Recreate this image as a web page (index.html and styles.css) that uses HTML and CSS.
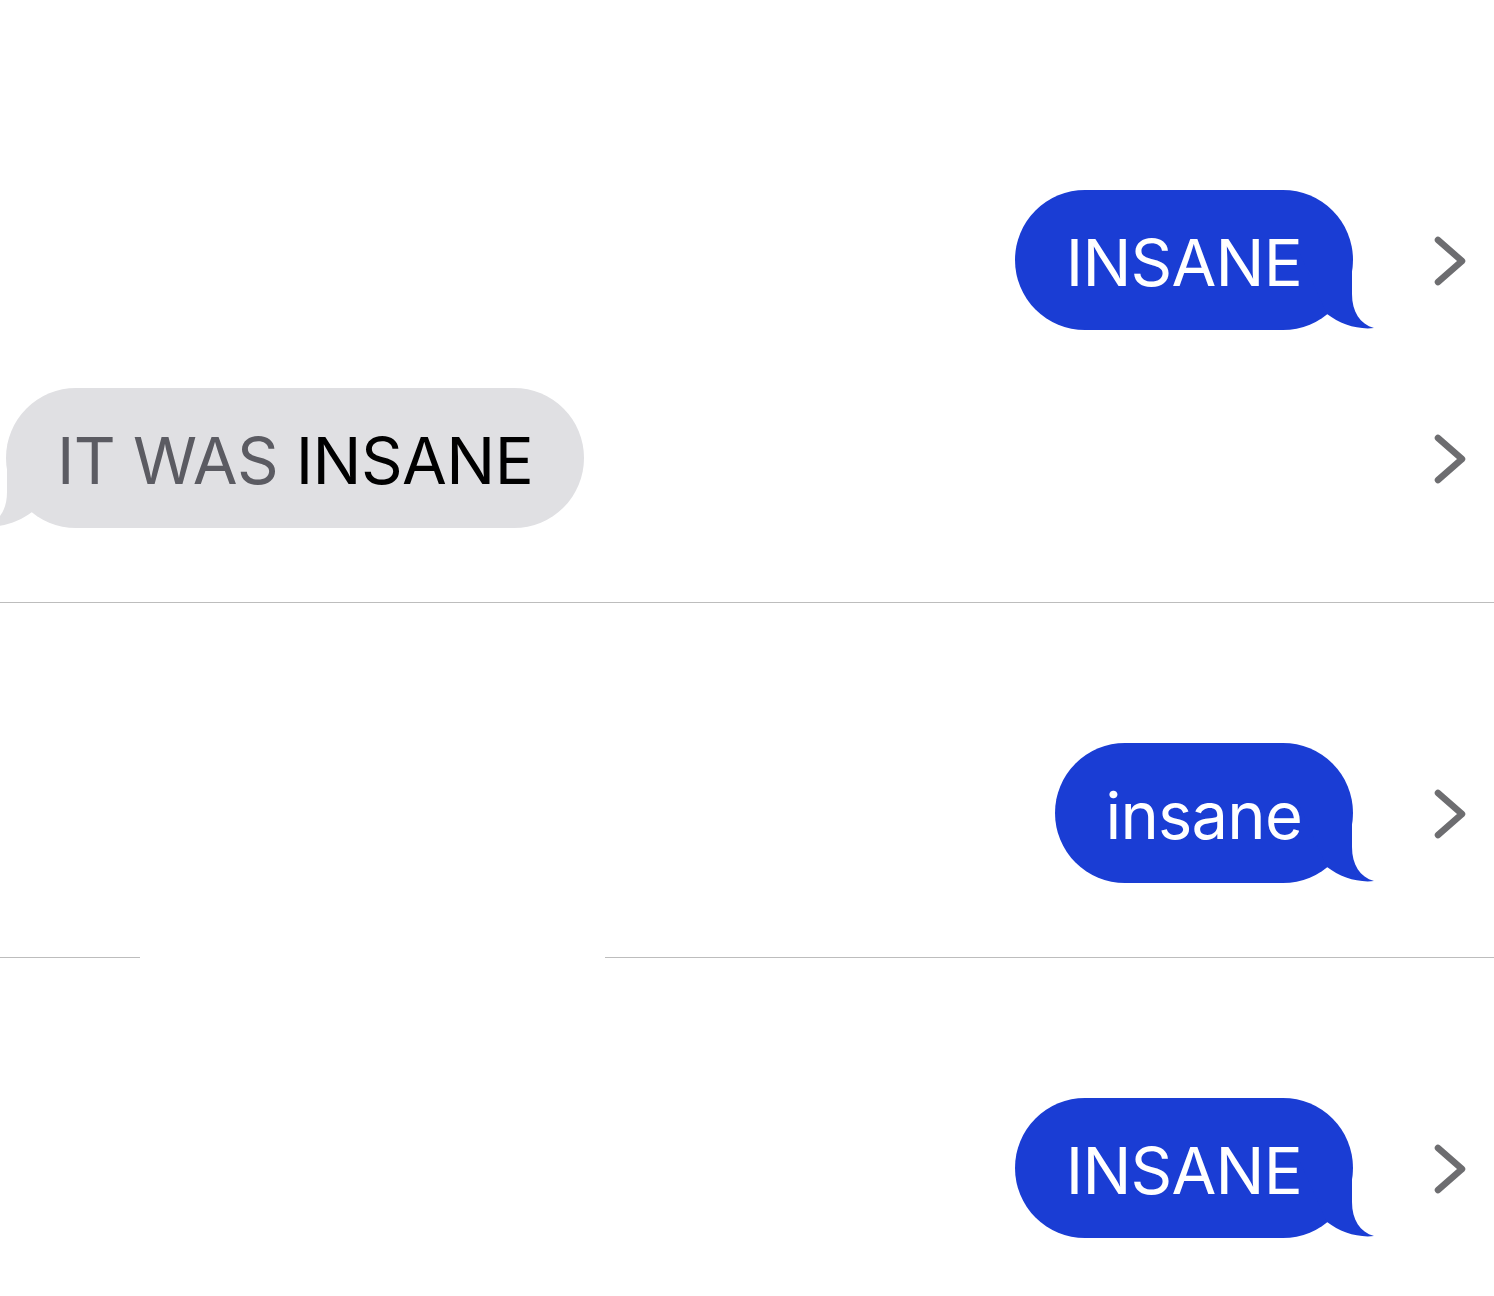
FILE: index.html
```html
<!DOCTYPE html>
<html>
<head>
<meta charset="utf-8">
<link rel="stylesheet" href="styles.css">
</head>
<body>
<div class="page">
  <section class="section first">
    <div class="row">
      <div class="lane lane-right">
        <div class="bubble sent">
          <span class="txt">INSANE</span>
          <svg class="tail tail-right" viewBox="0 0 76 76" width="76" height="76"><path d="M52 0 L52 40 C52 58 60 70 74 74 C58 76 40 70 27 60 L0 0 Z" fill="#1a3dd4"/></svg>
        </div>
      </div>
      <div class="chev-col"><svg class="chev" viewBox="0 0 32 52" width="32" height="52"><polyline points="4,6 28,27 4,48" fill="none" stroke="#6d6d70" stroke-width="6.5" stroke-linecap="round" stroke-linejoin="round"/></svg></div>
    </div>
    <div class="row">
      <div class="lane lane-left">
        <div class="bubble received">
          <span class="txt"><span class="dim">IT WAS</span> INSANE</span>
          <svg class="tail tail-left" viewBox="0 0 76 76" width="76" height="76"><path d="M52 0 L52 40 C52 58 60 70 74 74 C58 76 40 70 27 60 L0 0 Z" fill="#e0e0e3"/></svg>
        </div>
      </div>
      <div class="chev-col"><svg class="chev" viewBox="0 0 32 52" width="32" height="52"><polyline points="4,6 28,27 4,48" fill="none" stroke="#6d6d70" stroke-width="6.5" stroke-linecap="round" stroke-linejoin="round"/></svg></div>
    </div>
  </section>
  <div class="divider"></div>
  <section class="section">
    <div class="row">
      <div class="lane lane-right">
        <div class="bubble sent">
          <span class="txt">insane</span>
          <svg class="tail tail-right" viewBox="0 0 76 76" width="76" height="76"><path d="M52 0 L52 40 C52 58 60 70 74 74 C58 76 40 70 27 60 L0 0 Z" fill="#1a3dd4"/></svg>
        </div>
      </div>
      <div class="chev-col"><svg class="chev" viewBox="0 0 32 52" width="32" height="52"><polyline points="4,6 28,27 4,48" fill="none" stroke="#6d6d70" stroke-width="6.5" stroke-linecap="round" stroke-linejoin="round"/></svg></div>
    </div>
  </section>
  <div class="divider split"><span class="seg seg-a"></span><span class="gap"></span><span class="seg seg-b"></span></div>
  <section class="section">
    <div class="row">
      <div class="lane lane-right">
        <div class="bubble sent">
          <span class="txt">INSANE</span>
          <svg class="tail tail-right" viewBox="0 0 76 76" width="76" height="76"><path d="M52 0 L52 40 C52 58 60 70 74 74 C58 76 40 70 27 60 L0 0 Z" fill="#1a3dd4"/></svg>
        </div>
      </div>
      <div class="chev-col"><svg class="chev" viewBox="0 0 32 52" width="32" height="52"><polyline points="4,6 28,27 4,48" fill="none" stroke="#6d6d70" stroke-width="6.5" stroke-linecap="round" stroke-linejoin="round"/></svg></div>
    </div>
  </section>
</div>
</body>
</html>
```
FILE: styles.css
```css
html, body {
  margin: 0;
  padding: 0;
  background: #ffffff;
}
.page {
  width: 1494px;
  height: 1296px;
  overflow: hidden;
  font-family: Inter, "Liberation Sans", sans-serif;
}
.section {
  display: flex;
  flex-direction: column;
  gap: 58px;
  padding: 140px 0 74px;
}
.section.first {
  padding-top: 190px;
}
.row {
  display: flex;
  align-items: center;
  height: 140px;
}
.lane {
  flex: 1;
  display: flex;
}
.lane-right {
  justify-content: flex-end;
}
.lane-left {
  justify-content: flex-start;
  padding-left: 6px;
}
.chev-col {
  width: 141px;
  flex: none;
  display: flex;
  padding-left: 81px;
  box-sizing: border-box;
}
.chev {
  display: block;
}
.bubble {
  position: relative;
  height: 140px;
  box-sizing: border-box;
  padding: 0 51px 0 51px;
  border-radius: 70px;
  display: flex;
  align-items: center;
  font-size: 65px;
  line-height: 1;
  letter-spacing: -0.8px;
}
.txt {
  position: relative;
  z-index: 1;
  padding-top: 4px;
}
.sent {
  background: #1a3dd4;
  color: #ffffff;
}
.received {
  background: #e0e0e3;
  color: #000000;
  letter-spacing: -0.6px;
}
.dim {
  color: #5b5b62;
}
.tail {
  position: absolute;
  bottom: 0;
  display: block;
}
.tail-right {
  right: -23px;
}
.tail-left {
  left: -23px;
  transform: scaleX(-1);
}
.divider {
  height: 1px;
  background: #bdbdbd;
}
.divider.split {
  display: flex;
  background: none;
}
.seg {
  height: 1px;
  background: #bdbdbd;
}
.seg-a {
  width: 140px;
}
.gap {
  width: 465px;
}
.seg-b {
  flex: 1;
}
```
